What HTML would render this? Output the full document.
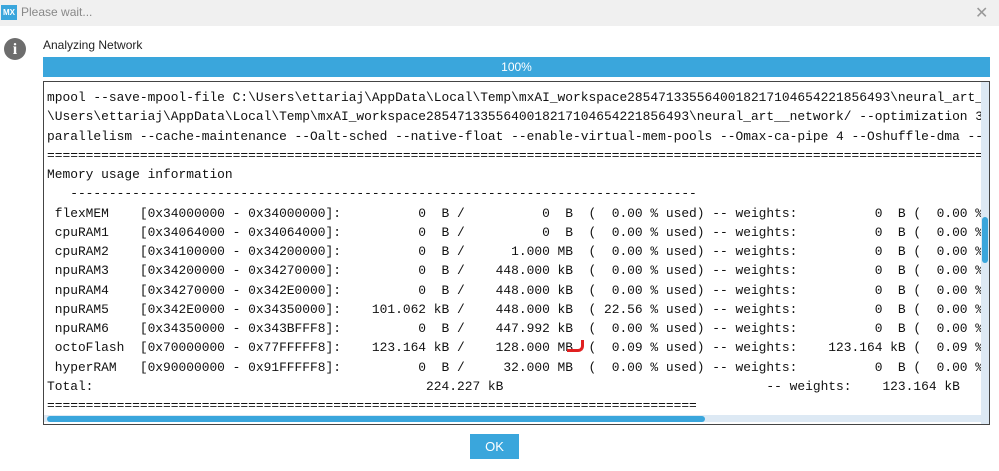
<!DOCTYPE html>
<html><head><style>
html,body{margin:0;padding:0;width:999px;height:471px;overflow:hidden;background:#fff;font-family:"Liberation Sans",sans-serif}
.tb{position:absolute;left:0;top:0;width:999px;height:26px;background:#f0f0f0}
.logo{position:absolute;left:1px;top:5px;width:16px;height:15px;background:#3aa6dc;color:#fff;font:bold 8px "Liberation Sans",sans-serif;line-height:15px;text-align:center}
.tt{position:absolute;left:21px;top:5px;font-size:12px;color:#888}
.x{position:absolute;left:975px;top:3px;font-size:16px;color:#999}
.info{position:absolute;left:4px;top:38px;width:22px;height:22px;border-radius:50%;background:#6d6d6d;color:#fff;font:bold 16px "Liberation Serif",serif;text-align:center;line-height:23px}
.an{position:absolute;left:43px;top:38px;font-size:12px;color:#222}
.pb{position:absolute;left:43px;top:57px;width:947px;height:20px;background:#3aa6dc;color:#fff;font-size:12px;text-align:center;line-height:21px}
.box{position:absolute;left:43px;top:81px;width:945px;height:342px;border:1px solid #444;overflow:hidden;background:#fff}
pre{position:absolute;left:3px;top:6px;margin:0;font:12.9px/19.25px "Liberation Mono",monospace;color:#111;width:934px;overflow:hidden}
.vs{position:absolute;left:937px;top:0;width:8px;height:342px;background:#dde9f4}
.vt{position:absolute;left:938px;top:135px;width:6px;height:46px;background:#3aa6dc;border-radius:3px}
.hs{position:absolute;left:0;top:333px;width:937px;height:7px;background:#dde9f4}
.ht{position:absolute;left:3px;top:334px;width:658px;height:6px;background:#3aa6dc;border-radius:3px}
.ok{position:absolute;left:470px;top:434px;width:49px;height:25px;background:#3aa6dc;color:#fff;font-size:13px;text-align:center;line-height:25px}
.red{position:absolute;left:567px;top:340px;width:14px;height:9px;border-right:3px solid #e02020;border-bottom:3px solid #e02020;border-bottom-right-radius:6px}
</style></head><body>
<div class="tb"><div class="logo">MX</div><div class="tt">Please wait...</div><div class="x">✕</div></div>
<div class="info">i</div>
<div class="an">Analyzing Network</div>
<div class="pb">100%</div>
<div class="box">
<pre>mpool --save-mpool-file C:\Users\ettariaj\AppData\Local\Temp\mxAI_workspace2854713355640018217104654221856493\neural_art_
\Users\ettariaj\AppData\Local\Temp\mxAI_workspace2854713355640018217104654221856493\neural_art__network/ --optimization 3
parallelism --cache-maintenance --Oalt-sched --native-float --enable-virtual-mem-pools --Omax-ca-pipe 4 --Oshuffle-dma --
==============================================================================================================================
Memory usage information
   ---------------------------------------------------------------------------------
 flexMEM    [0x34000000 - 0x34000000]:          0  B /          0  B  (  0.00 % used) -- weights:          0  B (  0.00 %
 cpuRAM1    [0x34064000 - 0x34064000]:          0  B /          0  B  (  0.00 % used) -- weights:          0  B (  0.00 %
 cpuRAM2    [0x34100000 - 0x34200000]:          0  B /      1.000 MB  (  0.00 % used) -- weights:          0  B (  0.00 %
 npuRAM3    [0x34200000 - 0x34270000]:          0  B /    448.000 kB  (  0.00 % used) -- weights:          0  B (  0.00 %
 npuRAM4    [0x34270000 - 0x342E0000]:          0  B /    448.000 kB  (  0.00 % used) -- weights:          0  B (  0.00 %
 npuRAM5    [0x342E0000 - 0x34350000]:    101.062 kB /    448.000 kB  ( 22.56 % used) -- weights:          0  B (  0.00 %
 npuRAM6    [0x34350000 - 0x343BFFF8]:          0  B /    447.992 kB  (  0.00 % used) -- weights:          0  B (  0.00 %
 octoFlash  [0x70000000 - 0x77FFFFF8]:    123.164 kB /    128.000 MB  (  0.09 % used) -- weights:    123.164 kB (  0.09 %
 hyperRAM   [0x90000000 - 0x91FFFFF8]:          0  B /     32.000 MB  (  0.00 % used) -- weights:          0  B (  0.00 %
Total:                                           224.227 kB                                  -- weights:    123.164 kB
====================================================================================</pre>
<div class="vs"></div><div class="vt"></div>
<div class="hs"></div><div class="ht"></div>
</div>
<div class="red"></div>
<div class="ok">OK</div>
</body></html>
